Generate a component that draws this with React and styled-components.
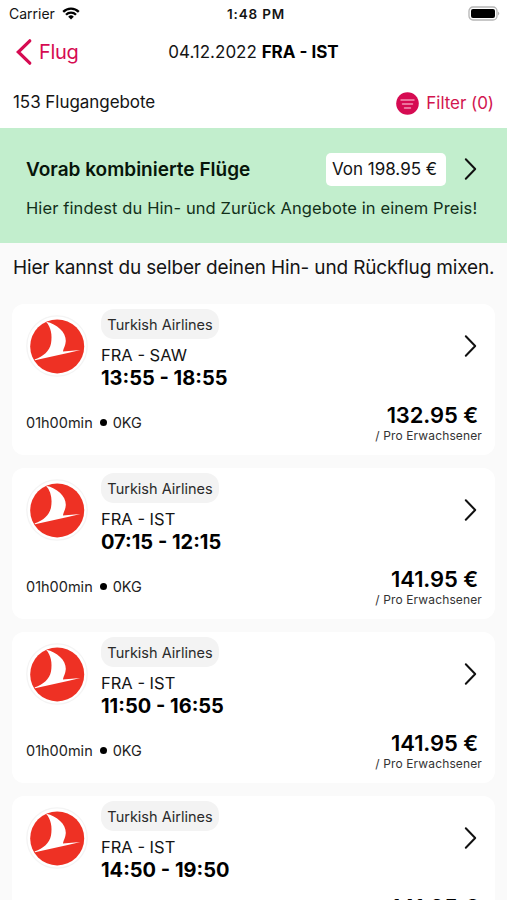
import React from 'react'
import styled, { createGlobalStyle } from 'styled-components'

const GlobalStyle = createGlobalStyle`
  * {
    box-sizing:border-box;
  }
  body {
    margin:0;
    background-color:#fafafa;
    font-family:Inter, "Liberation Sans", sans-serif;
    color:#141414;
  }
`;

const Screen = styled.div`
  width:507px;
  height:900px;
  overflow:hidden;
  white-space:nowrap;
`;

const Top = styled.header`
  height:128px;
  background-color:white;
`;

const StatusBar = styled.div`
  height:28px;
  padding:0 7px 0 9px;
  display:grid;
  grid-template-columns:1fr auto 1fr;
  align-items:center;
  font-size:14px;
`;

const Carrier = styled.div`
  display:flex;
  align-items:center;
  gap:7px;
  padding-bottom:1px;
`;

const Clock = styled.div`
  margin-left:3px;
  font-size:13.5px;
  font-weight:600;
  letter-spacing:0.8px;
`;

const BatteryIcon = styled.svg`
  justify-self:end;
  display:block;
  margin-bottom:2px;
`;

const NavBar = styled.nav`
  height:49px;
  padding:0 15px 1px;
  display:grid;
  grid-template-columns:1fr auto 1fr;
  align-items:center;
`;

const Back = styled.div`
  display:flex;
  align-items:center;
  gap:6px;
  color:#d60b52;
  font-size:20px;
  letter-spacing:-0.3px;
`;

const NavTitle = styled.div`
  font-size:17px;
  b {
    font-weight:700;
    color:black;
  }
`;

const CountRow = styled.div`
  height:50px;
  padding:0 13px;
  display:flex;
  align-items:center;
  justify-content:space-between;
  font-size:17px;
  letter-spacing:-0.05px;
`;

const Filter = styled.div`
  display:flex;
  align-items:center;
  gap:7px;
  padding-top:2px;
  color:#d2154f;
`;

const Banner = styled.section`
  height:115px;
  padding:24px 30px 0 26px;
  background-color:#c2eecd;
`;

const BannerRow = styled.div`
  height:34px;
  display:flex;
  align-items:center;
`;

const BannerTitle = styled.div`
  flex:1;
  font-size:19px;
  font-weight:600;
  color:#07150a;
`;

const PriceTag = styled.div`
  width:120px;
  height:33px;
  margin-right:18px;
  padding-right:3px;
  display:flex;
  align-items:center;
  justify-content:center;
  border-radius:5px;
  background-color:white;
  font-size:17px;
`;

const BannerText = styled.div`
  margin-top:10px;
  font-size:16.5px;
  line-height:24px;
  letter-spacing:0.1px;
  color:#12301a;
`;

const Note = styled.div`
  height:61px;
  padding:12px 13px 0;
  font-size:19px;
  line-height:25px;
  letter-spacing:-0.16px;
`;

const Card = styled.article`
  height:151px;
  margin:0 12px 13px;
  padding:5px 18px 0 14px;
  border-radius:12px;
  background-color:white;
`;

const CardTop = styled.div`
  height:90px;
  display:flex;
`;

const Logo = styled.svg`
  margin:6px 13px 0 0;
`;

const Info = styled.div`
  flex:1;
`;

const Airline = styled.div`
  width:118px;
  height:30px;
  display:flex;
  align-items:center;
  justify-content:center;
  border-radius:13px;
  background-color:#f3f3f3;
  font-size:14.5px;
  color:#2a2a2a;
`;

const Route = styled.div`
  margin-top:5px;
  font-size:16.5px;
  line-height:23px;
`;

const Time = styled.div`
  font-size:20px;
  font-weight:700;
  line-height:23px;
  color:black;
`;

const ChevronIcon = styled.svg`
  display:block;
  flex:none;
  margin-top:${props => props.$top || 0}px;
`;

const CardBottom = styled.div`
  display:flex;
  justify-content:space-between;
`;

const Details = styled.div`
  height:30px;
  margin-top:8px;
  display:flex;
  align-items:center;
  font-size:14.5px;
  color:#222;
`;

const Dot = styled.span`
  width:7px;
  height:7px;
  margin:0 6px 0 7px;
  border-radius:50%;
  background-color:black;
`;

const PriceBox = styled.div`
  display:flex;
  flex-direction:column;
  align-items:flex-end;
  margin-right:-5px;
`;

const Price = styled.div`
  margin:3px 4px 0 0;
  font-size:22px;
  font-weight:600;
  line-height:26px;
  letter-spacing:-0.1px;
  color:black;
`;

const PerPerson = styled.div`
  font-size:12px;
  line-height:16px;
  letter-spacing:0.13px;
  color:#333;
`;

const flights = [
  { route: 'FRA - SAW', time: '13:55 - 18:55', price: '132.95 €' },
  { route: 'FRA - IST', time: '07:15 - 12:15', price: '141.95 €' },
  { route: 'FRA - IST', time: '11:50 - 16:55', price: '141.95 €' },
  { route: 'FRA - IST', time: '14:50 - 19:50', price: '141.95 €' },
]

const Chevron = ({ top }) => (
  <ChevronIcon $top={top} width="13" height="24" viewBox="0 0 13 24">
    <path d="M1.8 2.2 L11.2 12 L1.8 21.8" fill="none" stroke="#111" strokeWidth="2" strokeLinecap="round" strokeLinejoin="round"/>
  </ChevronIcon>
)

const FlightCard = ({ flight }) => (
  <Card>
    <CardTop>
      <Logo width="62" height="62" viewBox="0 0 62 62">
        <circle cx="31" cy="31" r="30.2" fill="white" stroke="#f4f4f4" strokeWidth="1.3"/>
        <circle cx="31.2" cy="31.4" r="27" fill="#ee3124"/>
        <path d="M20 6.7 C31 9 40 17 39.8 26 C39.6 30.5 37.5 33 36.9 36.6 L54.3 35 C39 38.8 24 41.6 9 45.3 L8.6 44.4 C17.5 41.5 23.5 36 25 28.5 C26.5 20 25 12 20 6.7 Z" fill="white"/>
      </Logo>
      <Info>
        <Airline>Turkish Airlines</Airline>
        <Route>{flight.route}</Route>
        <Time>{flight.time}</Time>
      </Info>
      <Chevron top={25}/>
    </CardTop>
    <CardBottom>
      <Details>01h00min<Dot/>0KG</Details>
      <PriceBox>
        <Price>{flight.price}</Price>
        <PerPerson>/ Pro Erwachsener</PerPerson>
      </PriceBox>
    </CardBottom>
  </Card>
)

const App = () => {
  return (
    <Screen>
    <GlobalStyle/>
    <Top>
      <StatusBar>
        <Carrier>
          Carrier
          <svg width="18" height="13" viewBox="0 0 18 13">
            <g fill="none" stroke="black" strokeWidth="2.3">
              <path d="M1.2 4.9 A11 11 0 0 1 16.8 4.9"/>
              <path d="M4 7.8 A7 7 0 0 1 14 7.8"/>
            </g>
            <path d="M9 12.6 L6.2 9.7 A4 4 0 0 1 11.8 9.7 Z" fill="black"/>
          </svg>
        </Carrier>
        <Clock>1:48 PM</Clock>
        <BatteryIcon width="32" height="15" viewBox="0 0 32 15">
          <rect x="1" y="1" width="28" height="13" rx="4" fill="white" stroke="#b5b5b5" strokeWidth="1.3"/>
          <rect x="3" y="3" width="24" height="9" rx="2" fill="black"/>
          <path d="M30.2 5.5 Q32.2 7.5 30.2 9.5 Z" fill="#a5a5a5"/>
        </BatteryIcon>
      </StatusBar>
      <NavBar>
        <Back>
          <svg width="18" height="28" viewBox="0 0 18 28">
            <path d="M14.8 2.8 L3.3 14 L14.8 25.2" fill="none" stroke="#d60b52" strokeWidth="3.2" strokeLinecap="round" strokeLinejoin="miter"/>
          </svg>
          Flug
        </Back>
        <NavTitle>04.12.2022 <b>FRA - IST</b></NavTitle>
      </NavBar>
      <CountRow>
        <div>153 Flugangebote</div>
        <Filter>
          <svg width="23" height="23" viewBox="0 0 23 23">
            <circle cx="11.5" cy="11.5" r="11.3" fill="#d60b52"/>
            <path d="M5 8 H18 M6.5 12 H16.5 M8.5 16 H14.5" fill="none" stroke="#f495b5" strokeWidth="1.4" strokeLinecap="round"/>
          </svg>
          Filter (0)
        </Filter>
      </CountRow>
    </Top>
    <Banner>
      <BannerRow>
        <BannerTitle>Vorab kombinierte Flüge</BannerTitle>
        <PriceTag>Von 198.95 €</PriceTag>
        <Chevron/>
      </BannerRow>
      <BannerText>Hier findest du Hin- und Zurück Angebote in einem Preis!</BannerText>
    </Banner>
    <Note>Hier kannst du selber deinen Hin- und Rückflug mixen.</Note>
    {flights.map((flight, index) => (
      <FlightCard key={index} flight={flight}/>
    ))}
    </Screen>
  )
}
export default App
